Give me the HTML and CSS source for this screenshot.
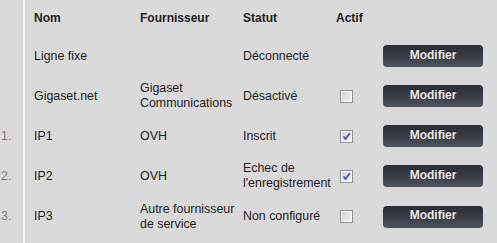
FILE: index.html
```html
<!DOCTYPE html>
<html lang="fr">
<head>
    <meta charset="UTF-8">
    <title>Connexions</title>
    <link rel="stylesheet" href="styles.css">
</head>
<body>

    <table class="lines">
        <tr class="head">
            <th class="num"></th>
            <th class="name">Nom</th>
            <th class="prov">Fournisseur</th>
            <th class="stat">Statut</th>
            <th class="act">Actif</th>
            <th class="edit"></th>
        </tr>
        <tr>
            <td class="num"></td>
            <td class="name">Ligne fixe</td>
            <td class="prov"></td>
            <td class="stat">Déconnecté</td>
            <td class="act"></td>
            <td class="edit"><button class="btn">Modifier</button></td>
        </tr>
        <tr>
            <td class="num"></td>
            <td class="name">Gigaset.net</td>
            <td class="prov">Gigaset<br>Communications</td>
            <td class="stat">Désactivé</td>
            <td class="act"><span class="box"></span></td>
            <td class="edit"><button class="btn">Modifier</button></td>
        </tr>
        <tr>
            <td class="num">1.</td>
            <td class="name">IP1</td>
            <td class="prov">OVH</td>
            <td class="stat">Inscrit</td>
            <td class="act"><span class="box"><svg viewBox="0 0 9 9" width="9" height="9"><path d="M1.5 4.5 L3.5 7 L7.8 1.2" fill="none" stroke="#3b4a9c" stroke-width="1.6"/></svg></span></td>
            <td class="edit"><button class="btn">Modifier</button></td>
        </tr>
        <tr>
            <td class="num">2.</td>
            <td class="name">IP2</td>
            <td class="prov">OVH</td>
            <td class="stat">Echec de<br>l'enregistrement</td>
            <td class="act"><span class="box"><svg viewBox="0 0 9 9" width="9" height="9"><path d="M1.5 4.5 L3.5 7 L7.8 1.2" fill="none" stroke="#3b4a9c" stroke-width="1.6"/></svg></span></td>
            <td class="edit"><button class="btn">Modifier</button></td>
        </tr>
        <tr class="last">
            <td class="num">3.</td>
            <td class="name">IP3</td>
            <td class="prov">Autre fournisseur<br>de service</td>
            <td class="stat">Non configuré</td>
            <td class="act"><span class="box"></span></td>
            <td class="edit"><button class="btn">Modifier</button></td>
        </tr>
    </table>

</body>
</html>
```

FILE: styles.css
```css
body {
    margin: 0;
    background-color: #d9d9d9;
    font-family: Arial, "Liberation Sans", sans-serif;
    color: #1e1e1e;
    height: 243px;
}

.lines {
    border-collapse: separate;
    border-spacing: 0;
    table-layout: fixed;
    width: 497px;
    height: 100%;
}

.lines td,
.lines th {
    box-sizing: border-box;
    padding: 0;
    font-size: 12.4px;
    line-height: 15px;
    text-align: left;
    vertical-align: middle;
}

.lines th {
    font-size: 12px;
    font-weight: bold;
    height: 36px;
    padding-top: 1px;
}

.lines tr td {
    height: 40px;
}

.lines tr.last td {
    height: 47px;
    padding-bottom: 6px;
}

.lines .num {
    width: 25px;
    border-right: 2px solid #f4f4f4;
    color: #808080;
    padding-left: 1px;
}

.lines .name {
    width: 115px;
    padding-left: 9px;
}

.prov {
    width: 103px;
}

.stat {
    width: 93px;
}

.act {
    width: 41px;
}

.lines td.act {
    padding-left: 4px;
}

.edit {
    width: 120px;
}

.box {
    display: inline-block;
    width: 11px;
    height: 11px;
    border: 1px solid #8e8e8e;
    box-shadow: inset 0 0 0 1px #fbfbfb;
    background: linear-gradient(135deg, #d2d2d2, #f4f4f4);
    vertical-align: middle;
    position: relative;
}

.box svg {
    position: absolute;
    left: 1px;
    top: 1px;
}

.btn {
    display: block;
    width: 100px;
    height: 22px;
    margin-left: 6px;
    border: none;
    border-radius: 4px;
    background: linear-gradient(#2b2f37, #3a3f48 55%, #4f555f);
    color: #eeeeee;
    font-family: Arial, "Liberation Sans", sans-serif;
    font-size: 12px;
    font-weight: bold;
    text-shadow: 0 -1px 0 #111;
    padding: 0 0 3px 0;
    cursor: pointer;
}
```
